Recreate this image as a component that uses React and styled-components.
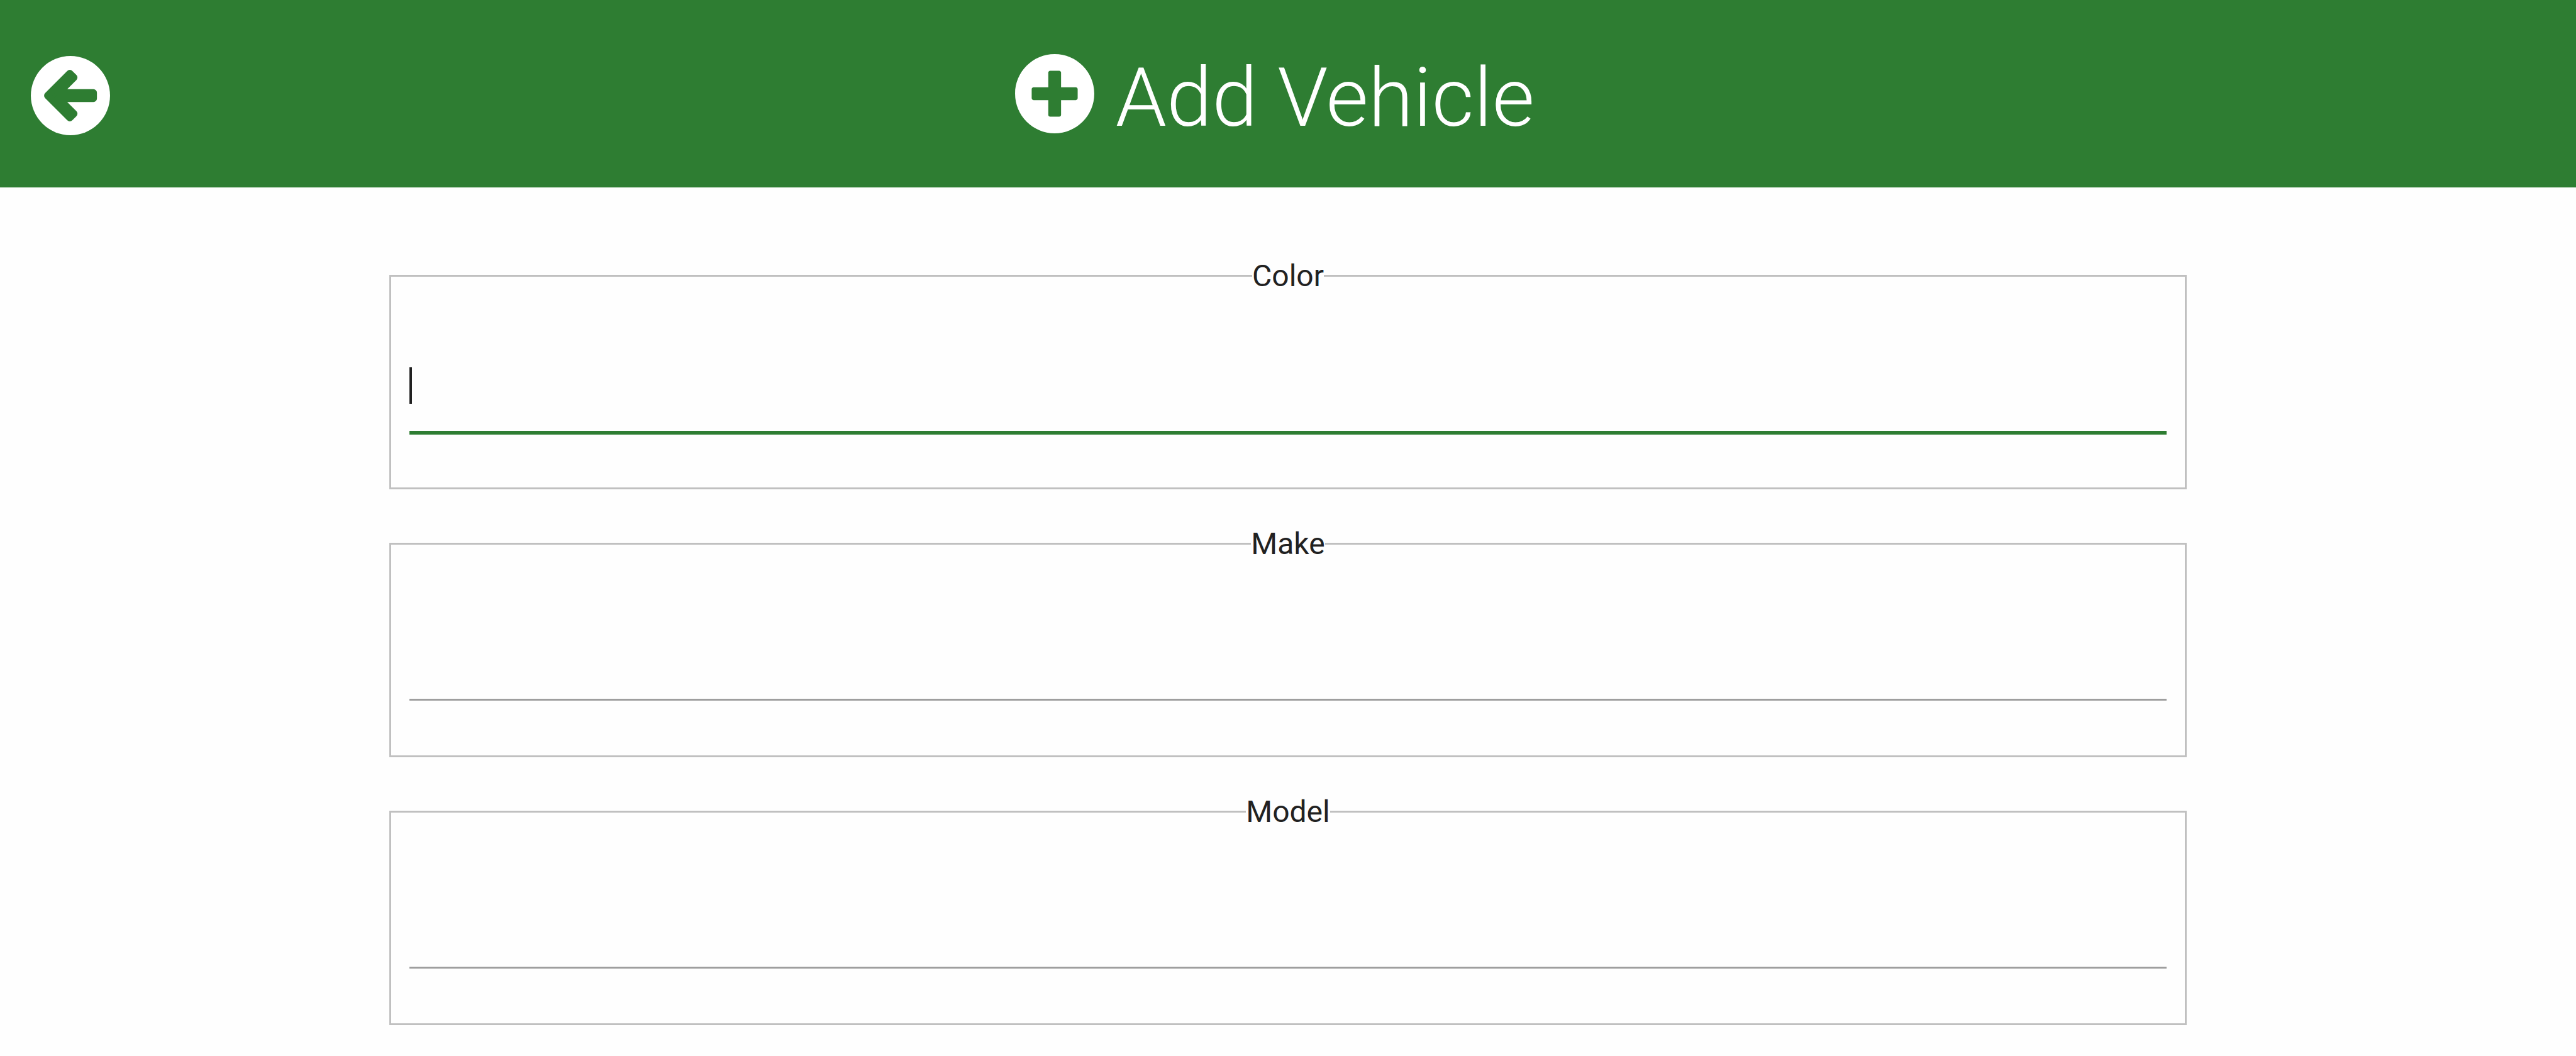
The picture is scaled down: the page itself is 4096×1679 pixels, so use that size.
import React from "react";
import styled, { createGlobalStyle } from "styled-components";
import { FaPlusCircle } from "react-icons/fa";

const GREEN = "#2e7d32";

const GlobalStyle = createGlobalStyle`
  *, *::before, *::after { box-sizing: border-box; }
  body {
    margin: 0;
    background: #fefefe;
    color: #212121;
    font-family: Roboto, "Liberation Sans", sans-serif;
    font-size: 48px;
  }
`;

const Header = styled.header`
  display: grid;
  grid-template-columns: 132px 1fr 176px;
  align-items: start;
  padding: 84px 46px 70px;
  background: ${GREEN};
  color: #fff;
`;

const BackButton = styled.button`
  display: flex;
  align-items: center;
  justify-content: center;
  height: 136px;
  padding: 0;
  border: 0;
  background: none;
  color: inherit;
  cursor: pointer;
`;

const BackGlyph = styled.svg`
  width: 130px;
  height: 130px;
`;

const Title = styled.h1`
  margin: 0;
  font-size: 130px;
  font-weight: 300;
  line-height: 144px;
  text-align: center;
  white-space: nowrap;
`;

const PlusIcon = styled(FaPlusCircle)`
  vertical-align: -14px;
`;

const Form = styled.form`
  display: flex;
  flex-direction: column;
  gap: 51px;
  width: 70%;
  margin: 0 auto;
  padding: 105px 5px 48px;
`;

const Fieldset = styled.fieldset`
  min-width: 0;
  margin: 0;
  padding: 67px 29px 87px;
  border: 3px solid #c0c0c0;
`;

const Legend = styled.legend`
  margin: 0 auto;
  padding: 0;
  line-height: 71px;
`;

const InputWrap = styled.div`
  display: flex;
  position: relative;
`;

const Input = styled.input`
  flex: 1;
  min-width: 0;
  height: 147px;
  padding: 0;
  border: 0;
  border-bottom: 3px solid ${(p) => (p.$active ? GREEN : "#9e9e9e")};
  border-radius: 0;
  box-shadow: ${(p) => (p.$active ? `0 3px 0 0 ${GREEN}` : "none")};
  outline: none;
  background: transparent;
  color: inherit;
  font: inherit;
  caret-color: transparent;
`;

const Caret = styled.span`
  position: absolute;
  left: 0;
  top: 43px;
  width: 4px;
  height: 58px;
  background: #212121;
  pointer-events: none;
`;

const FIELDS = [
  { id: "color", label: "Color" },
  { id: "make", label: "Make" },
  { id: "model", label: "Model" },
];

function BackIcon() {
  return (
    <BackGlyph viewBox="0 0 512 512" aria-hidden="true">
      <circle cx="256" cy="256" r="248" fill="currentColor" />
      <path
        d="M113 256 252 117 278 143 182 238H400V274H182L278 369 252 395Z"
        fill={GREEN}
        stroke={GREEN}
        strokeWidth="44"
        strokeLinejoin="round"
      />
    </BackGlyph>
  );
}

function Field({ id, label, active }) {
  return (
    <Fieldset>
      <Legend>
        <label htmlFor={id}>{label}</label>
      </Legend>
      <InputWrap>
        <Input id={id} name={id} type="text" $active={active} />
        {active && <Caret />}
      </InputWrap>
    </Fieldset>
  );
}

export default function App() {
  return (
    <>
      <GlobalStyle />
      <Header>
        <BackButton type="button" aria-label="Back">
          <BackIcon />
        </BackButton>
        <Title>
          <PlusIcon /> Add Vehicle
        </Title>
      </Header>
      <Form>
        {FIELDS.map((field) => (
          <Field key={field.id} {...field} active={field.id === "color"} />
        ))}
      </Form>
    </>
  );
}
